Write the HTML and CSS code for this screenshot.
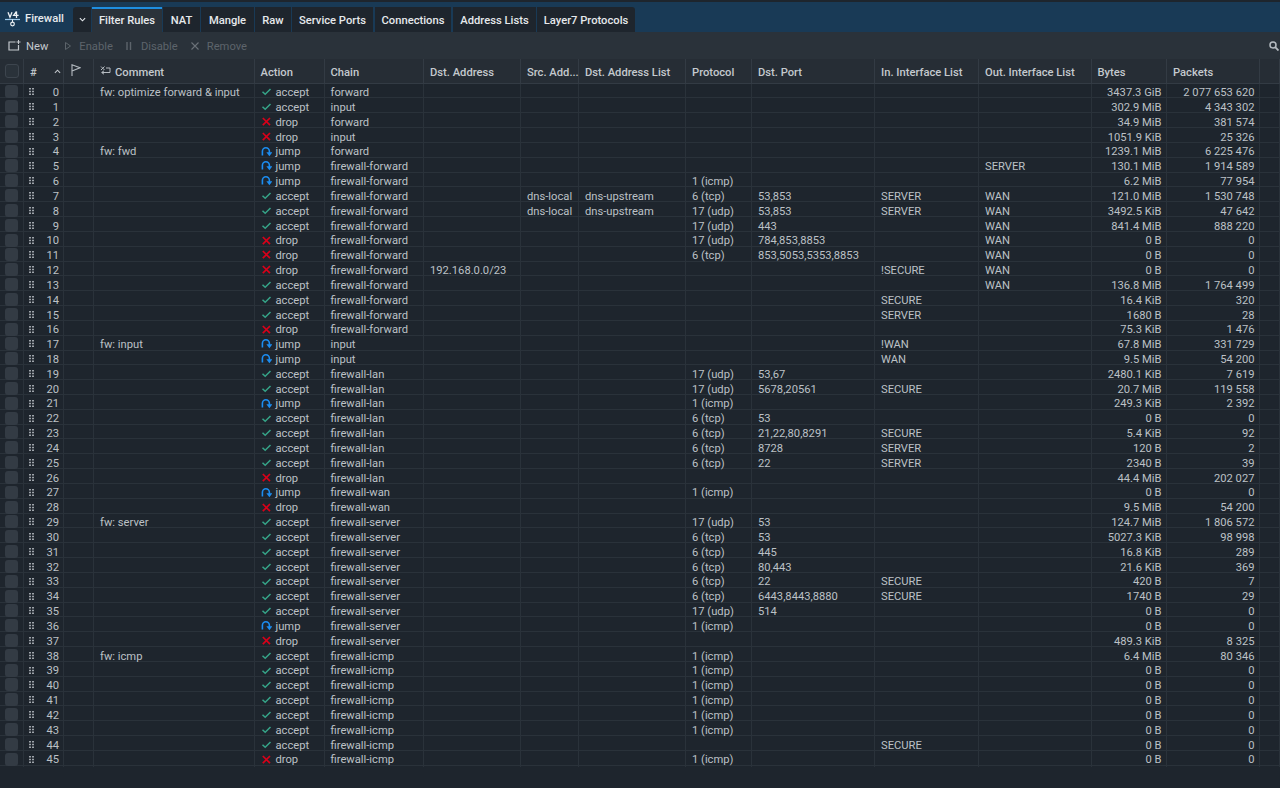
FILE: index.html
```html
<!DOCTYPE html>
<html lang="en">
<head>
<meta charset="utf-8">
<title>Firewall</title>
<link rel="stylesheet" href="styles.css">
</head>
<body>
<svg class="defs" width="0" height="0" aria-hidden="true">
<symbol id="ok" viewBox="0 0 11 11"><path d="M1.5 5.7 4.2 8.3 9.5 3" fill="none" stroke="#36a488" stroke-width="1.5"/></symbol>
<symbol id="no" viewBox="0 0 11 11"><path d="M1.8 2 9 9.2M9 2 1.8 9.2" fill="none" stroke="#d90019" stroke-width="1.7"/></symbol>
<symbol id="jp" viewBox="0 0 11 11"><path d="M1.4 9.5V5.2a3.5 3.5 0 0 1 7 0V7" fill="none" stroke="#1c8df0" stroke-width="1.6"/><path d="M5.4 6.2h6L8.4 10.2z" fill="#1c8df0"/></symbol>
<symbol id="gr" viewBox="0 0 5 7"><path d="M0 0h2v1.6H0zM3 0h2v1.6H3zM0 2.7h2v1.6H0zM3 2.7h2v1.6H3zM0 5.4h2V7H0zM3 5.4h2V7H3z" fill="#9ea4aa"/></symbol>
</svg>
<header class="topbar">
  <div class="brand">
    <svg class="logo" viewBox="0 0 15 16"><path d="M0 8.5h15" stroke="#9cc8ea" stroke-width="1.2"/><path d="M3 1.2 5 6.2 7 1.2M11.5.4 8.6 4.4H13.6M11.5.4V7" fill="none" stroke="#eef1f3" stroke-width="1.3"/><circle cx="7.5" cy="13" r="1.8" fill="none" stroke="#eef1f3" stroke-width="1.2"/><path d="M7.5 8.5v2.6" stroke="#eef1f3"/></svg>
    <span>Firewall</span>
  </div>
  <nav class="tabs">
    <div class="tab more"><svg viewBox="0 0 8 5" class="chev"><path d="M1 1 4 4 7 1" fill="none" stroke="#e4e8ec" stroke-width="1.3"/></svg></div>
    <div class="tab active t1">Filter Rules</div>
    <div class="tab t2">NAT</div>
    <div class="tab t3">Mangle</div>
    <div class="tab t4">Raw</div>
    <div class="tab t5">Service Ports</div>
    <div class="tab t6">Connections</div>
    <div class="tab t7">Address Lists</div>
    <div class="tab t8">Layer7 Protocols</div>
  </nav>
</header>
<div class="toolbar">
  <div class="tool on"><svg class="ti" viewBox="0 0 13 11"><path d="M7.5 2H1v8h9.5V5" fill="none" stroke="#c4c9ce" stroke-width="1.2"/><path d="M10.5 0v4M8.5 2h4" stroke="#c4c9ce"/></svg>New</div>
  <div class="tool en"><svg class="ts" viewBox="0 0 6 8"><path d="M.5.5 5.5 4 .5 7.5z" fill="none" stroke="#5d646b"/></svg>Enable</div>
  <div class="tool dis"><svg class="ts" viewBox="0 0 6 8"><path d="M1 0v8M4.5 0v8" stroke="#5d646b" stroke-width="1.4"/></svg>Disable</div>
  <div class="tool"><svg class="ts x" viewBox="0 0 8 8"><path d="M.5.5 7.5 7.5M7.5.5.5 7.5" stroke="#6a7178" stroke-width="1.1"/></svg>Remove</div>
  <svg class="search" viewBox="0 0 10 10"><circle cx="4" cy="4" r="3" fill="none" stroke="#b5bbc1" stroke-width="1.5"/><path d="M6.2 6.2 9.5 9.5" stroke="#b5bbc1" stroke-width="1.8"/></svg>
</div>
<main class="grid">
<div class="row head">
<div class="c"><span class="box"></span></div>
<div class="c idx"><span>#</span><svg class="sort" viewBox="0 0 8 5"><path d="M1 4 4 1 7 4" fill="none" stroke="#c4c9ce" stroke-width="1.2"/></svg></div>
<div class="c fl"><svg class="flag" viewBox="0 0 10 12"><path d="M1 12V.8L9 3.8 1 7" fill="none" stroke="#b5bbc1" stroke-width="1.1"/></svg></div>
<div class="c"><svg class="cm" viewBox="0 0 11 11"><path d="M1 .5 4.5 4M4.5.5 1 4M6 2h4v4.5H2M4 4.8 1.6 6.5 4 8.2" fill="none" stroke="#b5bbc1"/></svg>Comment</div>
<div class="c">Action</div><div class="c">Chain</div><div class="c">Dst. Address</div><div class="c">Src. Add...</div><div class="c">Dst. Address List</div><div class="c">Protocol</div><div class="c">Dst. Port</div><div class="c">In. Interface List</div><div class="c">Out. Interface List</div><div class="c">Bytes</div><div class="c">Packets</div><div class="c"></div>
</div>
<div class="row"><div class="c"><span class="box"></span></div><div class="c idx"><svg class="grip"><use href="#gr"/></svg><span class="n">0</span></div><div class="c"></div><div class="c">fw: optimize forward &amp; input</div><div class="c"><svg class="a"><use href="#ok"/></svg>accept</div><div class="c">forward</div><div class="c"></div><div class="c"></div><div class="c"></div><div class="c"></div><div class="c"></div><div class="c"></div><div class="c"></div><div class="c r">3437.3 GiB</div><div class="c r">2 077 653 620</div><div class="c"></div></div>
<div class="row"><div class="c"><span class="box"></span></div><div class="c idx"><svg class="grip"><use href="#gr"/></svg><span class="n">1</span></div><div class="c"></div><div class="c"></div><div class="c"><svg class="a"><use href="#ok"/></svg>accept</div><div class="c">input</div><div class="c"></div><div class="c"></div><div class="c"></div><div class="c"></div><div class="c"></div><div class="c"></div><div class="c"></div><div class="c r">302.9 MiB</div><div class="c r">4 343 302</div><div class="c"></div></div>
<div class="row"><div class="c"><span class="box"></span></div><div class="c idx"><svg class="grip"><use href="#gr"/></svg><span class="n">2</span></div><div class="c"></div><div class="c"></div><div class="c"><svg class="a"><use href="#no"/></svg>drop</div><div class="c">forward</div><div class="c"></div><div class="c"></div><div class="c"></div><div class="c"></div><div class="c"></div><div class="c"></div><div class="c"></div><div class="c r">34.9 MiB</div><div class="c r">381 574</div><div class="c"></div></div>
<div class="row"><div class="c"><span class="box"></span></div><div class="c idx"><svg class="grip"><use href="#gr"/></svg><span class="n">3</span></div><div class="c"></div><div class="c"></div><div class="c"><svg class="a"><use href="#no"/></svg>drop</div><div class="c">input</div><div class="c"></div><div class="c"></div><div class="c"></div><div class="c"></div><div class="c"></div><div class="c"></div><div class="c"></div><div class="c r">1051.9 KiB</div><div class="c r">25 326</div><div class="c"></div></div>
<div class="row"><div class="c"><span class="box"></span></div><div class="c idx"><svg class="grip"><use href="#gr"/></svg><span class="n">4</span></div><div class="c"></div><div class="c">fw: fwd</div><div class="c"><svg class="a"><use href="#jp"/></svg>jump</div><div class="c">forward</div><div class="c"></div><div class="c"></div><div class="c"></div><div class="c"></div><div class="c"></div><div class="c"></div><div class="c"></div><div class="c r">1239.1 MiB</div><div class="c r">6 225 476</div><div class="c"></div></div>
<div class="row"><div class="c"><span class="box"></span></div><div class="c idx"><svg class="grip"><use href="#gr"/></svg><span class="n">5</span></div><div class="c"></div><div class="c"></div><div class="c"><svg class="a"><use href="#jp"/></svg>jump</div><div class="c">firewall-forward</div><div class="c"></div><div class="c"></div><div class="c"></div><div class="c"></div><div class="c"></div><div class="c"></div><div class="c">SERVER</div><div class="c r">130.1 MiB</div><div class="c r">1 914 589</div><div class="c"></div></div>
<div class="row"><div class="c"><span class="box"></span></div><div class="c idx"><svg class="grip"><use href="#gr"/></svg><span class="n">6</span></div><div class="c"></div><div class="c"></div><div class="c"><svg class="a"><use href="#jp"/></svg>jump</div><div class="c">firewall-forward</div><div class="c"></div><div class="c"></div><div class="c"></div><div class="c">1 (icmp)</div><div class="c"></div><div class="c"></div><div class="c"></div><div class="c r">6.2 MiB</div><div class="c r">77 954</div><div class="c"></div></div>
<div class="row"><div class="c"><span class="box"></span></div><div class="c idx"><svg class="grip"><use href="#gr"/></svg><span class="n">7</span></div><div class="c"></div><div class="c"></div><div class="c"><svg class="a"><use href="#ok"/></svg>accept</div><div class="c">firewall-forward</div><div class="c"></div><div class="c">dns-local</div><div class="c">dns-upstream</div><div class="c">6 (tcp)</div><div class="c">53,853</div><div class="c">SERVER</div><div class="c">WAN</div><div class="c r">121.0 MiB</div><div class="c r">1 530 748</div><div class="c"></div></div>
<div class="row"><div class="c"><span class="box"></span></div><div class="c idx"><svg class="grip"><use href="#gr"/></svg><span class="n">8</span></div><div class="c"></div><div class="c"></div><div class="c"><svg class="a"><use href="#ok"/></svg>accept</div><div class="c">firewall-forward</div><div class="c"></div><div class="c">dns-local</div><div class="c">dns-upstream</div><div class="c">17 (udp)</div><div class="c">53,853</div><div class="c">SERVER</div><div class="c">WAN</div><div class="c r">3492.5 KiB</div><div class="c r">47 642</div><div class="c"></div></div>
<div class="row"><div class="c"><span class="box"></span></div><div class="c idx"><svg class="grip"><use href="#gr"/></svg><span class="n">9</span></div><div class="c"></div><div class="c"></div><div class="c"><svg class="a"><use href="#ok"/></svg>accept</div><div class="c">firewall-forward</div><div class="c"></div><div class="c"></div><div class="c"></div><div class="c">17 (udp)</div><div class="c">443</div><div class="c"></div><div class="c">WAN</div><div class="c r">841.4 MiB</div><div class="c r">888 220</div><div class="c"></div></div>
<div class="row"><div class="c"><span class="box"></span></div><div class="c idx"><svg class="grip"><use href="#gr"/></svg><span class="n">10</span></div><div class="c"></div><div class="c"></div><div class="c"><svg class="a"><use href="#no"/></svg>drop</div><div class="c">firewall-forward</div><div class="c"></div><div class="c"></div><div class="c"></div><div class="c">17 (udp)</div><div class="c">784,853,8853</div><div class="c"></div><div class="c">WAN</div><div class="c r">0 B</div><div class="c r">0</div><div class="c"></div></div>
<div class="row"><div class="c"><span class="box"></span></div><div class="c idx"><svg class="grip"><use href="#gr"/></svg><span class="n">11</span></div><div class="c"></div><div class="c"></div><div class="c"><svg class="a"><use href="#no"/></svg>drop</div><div class="c">firewall-forward</div><div class="c"></div><div class="c"></div><div class="c"></div><div class="c">6 (tcp)</div><div class="c">853,5053,5353,8853</div><div class="c"></div><div class="c">WAN</div><div class="c r">0 B</div><div class="c r">0</div><div class="c"></div></div>
<div class="row"><div class="c"><span class="box"></span></div><div class="c idx"><svg class="grip"><use href="#gr"/></svg><span class="n">12</span></div><div class="c"></div><div class="c"></div><div class="c"><svg class="a"><use href="#no"/></svg>drop</div><div class="c">firewall-forward</div><div class="c">192.168.0.0/23</div><div class="c"></div><div class="c"></div><div class="c"></div><div class="c"></div><div class="c">!SECURE</div><div class="c">WAN</div><div class="c r">0 B</div><div class="c r">0</div><div class="c"></div></div>
<div class="row"><div class="c"><span class="box"></span></div><div class="c idx"><svg class="grip"><use href="#gr"/></svg><span class="n">13</span></div><div class="c"></div><div class="c"></div><div class="c"><svg class="a"><use href="#ok"/></svg>accept</div><div class="c">firewall-forward</div><div class="c"></div><div class="c"></div><div class="c"></div><div class="c"></div><div class="c"></div><div class="c"></div><div class="c">WAN</div><div class="c r">136.8 MiB</div><div class="c r">1 764 499</div><div class="c"></div></div>
<div class="row"><div class="c"><span class="box"></span></div><div class="c idx"><svg class="grip"><use href="#gr"/></svg><span class="n">14</span></div><div class="c"></div><div class="c"></div><div class="c"><svg class="a"><use href="#ok"/></svg>accept</div><div class="c">firewall-forward</div><div class="c"></div><div class="c"></div><div class="c"></div><div class="c"></div><div class="c"></div><div class="c">SECURE</div><div class="c"></div><div class="c r">16.4 KiB</div><div class="c r">320</div><div class="c"></div></div>
<div class="row"><div class="c"><span class="box"></span></div><div class="c idx"><svg class="grip"><use href="#gr"/></svg><span class="n">15</span></div><div class="c"></div><div class="c"></div><div class="c"><svg class="a"><use href="#ok"/></svg>accept</div><div class="c">firewall-forward</div><div class="c"></div><div class="c"></div><div class="c"></div><div class="c"></div><div class="c"></div><div class="c">SERVER</div><div class="c"></div><div class="c r">1680 B</div><div class="c r">28</div><div class="c"></div></div>
<div class="row"><div class="c"><span class="box"></span></div><div class="c idx"><svg class="grip"><use href="#gr"/></svg><span class="n">16</span></div><div class="c"></div><div class="c"></div><div class="c"><svg class="a"><use href="#no"/></svg>drop</div><div class="c">firewall-forward</div><div class="c"></div><div class="c"></div><div class="c"></div><div class="c"></div><div class="c"></div><div class="c"></div><div class="c"></div><div class="c r">75.3 KiB</div><div class="c r">1 476</div><div class="c"></div></div>
<div class="row"><div class="c"><span class="box"></span></div><div class="c idx"><svg class="grip"><use href="#gr"/></svg><span class="n">17</span></div><div class="c"></div><div class="c">fw: input</div><div class="c"><svg class="a"><use href="#jp"/></svg>jump</div><div class="c">input</div><div class="c"></div><div class="c"></div><div class="c"></div><div class="c"></div><div class="c"></div><div class="c">!WAN</div><div class="c"></div><div class="c r">67.8 MiB</div><div class="c r">331 729</div><div class="c"></div></div>
<div class="row"><div class="c"><span class="box"></span></div><div class="c idx"><svg class="grip"><use href="#gr"/></svg><span class="n">18</span></div><div class="c"></div><div class="c"></div><div class="c"><svg class="a"><use href="#jp"/></svg>jump</div><div class="c">input</div><div class="c"></div><div class="c"></div><div class="c"></div><div class="c"></div><div class="c"></div><div class="c">WAN</div><div class="c"></div><div class="c r">9.5 MiB</div><div class="c r">54 200</div><div class="c"></div></div>
<div class="row"><div class="c"><span class="box"></span></div><div class="c idx"><svg class="grip"><use href="#gr"/></svg><span class="n">19</span></div><div class="c"></div><div class="c"></div><div class="c"><svg class="a"><use href="#ok"/></svg>accept</div><div class="c">firewall-lan</div><div class="c"></div><div class="c"></div><div class="c"></div><div class="c">17 (udp)</div><div class="c">53,67</div><div class="c"></div><div class="c"></div><div class="c r">2480.1 KiB</div><div class="c r">7 619</div><div class="c"></div></div>
<div class="row"><div class="c"><span class="box"></span></div><div class="c idx"><svg class="grip"><use href="#gr"/></svg><span class="n">20</span></div><div class="c"></div><div class="c"></div><div class="c"><svg class="a"><use href="#ok"/></svg>accept</div><div class="c">firewall-lan</div><div class="c"></div><div class="c"></div><div class="c"></div><div class="c">17 (udp)</div><div class="c">5678,20561</div><div class="c">SECURE</div><div class="c"></div><div class="c r">20.7 MiB</div><div class="c r">119 558</div><div class="c"></div></div>
<div class="row"><div class="c"><span class="box"></span></div><div class="c idx"><svg class="grip"><use href="#gr"/></svg><span class="n">21</span></div><div class="c"></div><div class="c"></div><div class="c"><svg class="a"><use href="#jp"/></svg>jump</div><div class="c">firewall-lan</div><div class="c"></div><div class="c"></div><div class="c"></div><div class="c">1 (icmp)</div><div class="c"></div><div class="c"></div><div class="c"></div><div class="c r">249.3 KiB</div><div class="c r">2 392</div><div class="c"></div></div>
<div class="row"><div class="c"><span class="box"></span></div><div class="c idx"><svg class="grip"><use href="#gr"/></svg><span class="n">22</span></div><div class="c"></div><div class="c"></div><div class="c"><svg class="a"><use href="#ok"/></svg>accept</div><div class="c">firewall-lan</div><div class="c"></div><div class="c"></div><div class="c"></div><div class="c">6 (tcp)</div><div class="c">53</div><div class="c"></div><div class="c"></div><div class="c r">0 B</div><div class="c r">0</div><div class="c"></div></div>
<div class="row"><div class="c"><span class="box"></span></div><div class="c idx"><svg class="grip"><use href="#gr"/></svg><span class="n">23</span></div><div class="c"></div><div class="c"></div><div class="c"><svg class="a"><use href="#ok"/></svg>accept</div><div class="c">firewall-lan</div><div class="c"></div><div class="c"></div><div class="c"></div><div class="c">6 (tcp)</div><div class="c">21,22,80,8291</div><div class="c">SECURE</div><div class="c"></div><div class="c r">5.4 KiB</div><div class="c r">92</div><div class="c"></div></div>
<div class="row"><div class="c"><span class="box"></span></div><div class="c idx"><svg class="grip"><use href="#gr"/></svg><span class="n">24</span></div><div class="c"></div><div class="c"></div><div class="c"><svg class="a"><use href="#ok"/></svg>accept</div><div class="c">firewall-lan</div><div class="c"></div><div class="c"></div><div class="c"></div><div class="c">6 (tcp)</div><div class="c">8728</div><div class="c">SERVER</div><div class="c"></div><div class="c r">120 B</div><div class="c r">2</div><div class="c"></div></div>
<div class="row"><div class="c"><span class="box"></span></div><div class="c idx"><svg class="grip"><use href="#gr"/></svg><span class="n">25</span></div><div class="c"></div><div class="c"></div><div class="c"><svg class="a"><use href="#ok"/></svg>accept</div><div class="c">firewall-lan</div><div class="c"></div><div class="c"></div><div class="c"></div><div class="c">6 (tcp)</div><div class="c">22</div><div class="c">SERVER</div><div class="c"></div><div class="c r">2340 B</div><div class="c r">39</div><div class="c"></div></div>
<div class="row"><div class="c"><span class="box"></span></div><div class="c idx"><svg class="grip"><use href="#gr"/></svg><span class="n">26</span></div><div class="c"></div><div class="c"></div><div class="c"><svg class="a"><use href="#no"/></svg>drop</div><div class="c">firewall-lan</div><div class="c"></div><div class="c"></div><div class="c"></div><div class="c"></div><div class="c"></div><div class="c"></div><div class="c"></div><div class="c r">44.4 MiB</div><div class="c r">202 027</div><div class="c"></div></div>
<div class="row"><div class="c"><span class="box"></span></div><div class="c idx"><svg class="grip"><use href="#gr"/></svg><span class="n">27</span></div><div class="c"></div><div class="c"></div><div class="c"><svg class="a"><use href="#jp"/></svg>jump</div><div class="c">firewall-wan</div><div class="c"></div><div class="c"></div><div class="c"></div><div class="c">1 (icmp)</div><div class="c"></div><div class="c"></div><div class="c"></div><div class="c r">0 B</div><div class="c r">0</div><div class="c"></div></div>
<div class="row"><div class="c"><span class="box"></span></div><div class="c idx"><svg class="grip"><use href="#gr"/></svg><span class="n">28</span></div><div class="c"></div><div class="c"></div><div class="c"><svg class="a"><use href="#no"/></svg>drop</div><div class="c">firewall-wan</div><div class="c"></div><div class="c"></div><div class="c"></div><div class="c"></div><div class="c"></div><div class="c"></div><div class="c"></div><div class="c r">9.5 MiB</div><div class="c r">54 200</div><div class="c"></div></div>
<div class="row"><div class="c"><span class="box"></span></div><div class="c idx"><svg class="grip"><use href="#gr"/></svg><span class="n">29</span></div><div class="c"></div><div class="c">fw: server</div><div class="c"><svg class="a"><use href="#ok"/></svg>accept</div><div class="c">firewall-server</div><div class="c"></div><div class="c"></div><div class="c"></div><div class="c">17 (udp)</div><div class="c">53</div><div class="c"></div><div class="c"></div><div class="c r">124.7 MiB</div><div class="c r">1 806 572</div><div class="c"></div></div>
<div class="row"><div class="c"><span class="box"></span></div><div class="c idx"><svg class="grip"><use href="#gr"/></svg><span class="n">30</span></div><div class="c"></div><div class="c"></div><div class="c"><svg class="a"><use href="#ok"/></svg>accept</div><div class="c">firewall-server</div><div class="c"></div><div class="c"></div><div class="c"></div><div class="c">6 (tcp)</div><div class="c">53</div><div class="c"></div><div class="c"></div><div class="c r">5027.3 KiB</div><div class="c r">98 998</div><div class="c"></div></div>
<div class="row"><div class="c"><span class="box"></span></div><div class="c idx"><svg class="grip"><use href="#gr"/></svg><span class="n">31</span></div><div class="c"></div><div class="c"></div><div class="c"><svg class="a"><use href="#ok"/></svg>accept</div><div class="c">firewall-server</div><div class="c"></div><div class="c"></div><div class="c"></div><div class="c">6 (tcp)</div><div class="c">445</div><div class="c"></div><div class="c"></div><div class="c r">16.8 KiB</div><div class="c r">289</div><div class="c"></div></div>
<div class="row"><div class="c"><span class="box"></span></div><div class="c idx"><svg class="grip"><use href="#gr"/></svg><span class="n">32</span></div><div class="c"></div><div class="c"></div><div class="c"><svg class="a"><use href="#ok"/></svg>accept</div><div class="c">firewall-server</div><div class="c"></div><div class="c"></div><div class="c"></div><div class="c">6 (tcp)</div><div class="c">80,443</div><div class="c"></div><div class="c"></div><div class="c r">21.6 KiB</div><div class="c r">369</div><div class="c"></div></div>
<div class="row"><div class="c"><span class="box"></span></div><div class="c idx"><svg class="grip"><use href="#gr"/></svg><span class="n">33</span></div><div class="c"></div><div class="c"></div><div class="c"><svg class="a"><use href="#ok"/></svg>accept</div><div class="c">firewall-server</div><div class="c"></div><div class="c"></div><div class="c"></div><div class="c">6 (tcp)</div><div class="c">22</div><div class="c">SECURE</div><div class="c"></div><div class="c r">420 B</div><div class="c r">7</div><div class="c"></div></div>
<div class="row"><div class="c"><span class="box"></span></div><div class="c idx"><svg class="grip"><use href="#gr"/></svg><span class="n">34</span></div><div class="c"></div><div class="c"></div><div class="c"><svg class="a"><use href="#ok"/></svg>accept</div><div class="c">firewall-server</div><div class="c"></div><div class="c"></div><div class="c"></div><div class="c">6 (tcp)</div><div class="c">6443,8443,8880</div><div class="c">SECURE</div><div class="c"></div><div class="c r">1740 B</div><div class="c r">29</div><div class="c"></div></div>
<div class="row"><div class="c"><span class="box"></span></div><div class="c idx"><svg class="grip"><use href="#gr"/></svg><span class="n">35</span></div><div class="c"></div><div class="c"></div><div class="c"><svg class="a"><use href="#ok"/></svg>accept</div><div class="c">firewall-server</div><div class="c"></div><div class="c"></div><div class="c"></div><div class="c">17 (udp)</div><div class="c">514</div><div class="c"></div><div class="c"></div><div class="c r">0 B</div><div class="c r">0</div><div class="c"></div></div>
<div class="row"><div class="c"><span class="box"></span></div><div class="c idx"><svg class="grip"><use href="#gr"/></svg><span class="n">36</span></div><div class="c"></div><div class="c"></div><div class="c"><svg class="a"><use href="#jp"/></svg>jump</div><div class="c">firewall-server</div><div class="c"></div><div class="c"></div><div class="c"></div><div class="c">1 (icmp)</div><div class="c"></div><div class="c"></div><div class="c"></div><div class="c r">0 B</div><div class="c r">0</div><div class="c"></div></div>
<div class="row"><div class="c"><span class="box"></span></div><div class="c idx"><svg class="grip"><use href="#gr"/></svg><span class="n">37</span></div><div class="c"></div><div class="c"></div><div class="c"><svg class="a"><use href="#no"/></svg>drop</div><div class="c">firewall-server</div><div class="c"></div><div class="c"></div><div class="c"></div><div class="c"></div><div class="c"></div><div class="c"></div><div class="c"></div><div class="c r">489.3 KiB</div><div class="c r">8 325</div><div class="c"></div></div>
<div class="row"><div class="c"><span class="box"></span></div><div class="c idx"><svg class="grip"><use href="#gr"/></svg><span class="n">38</span></div><div class="c"></div><div class="c">fw: icmp</div><div class="c"><svg class="a"><use href="#ok"/></svg>accept</div><div class="c">firewall-icmp</div><div class="c"></div><div class="c"></div><div class="c"></div><div class="c">1 (icmp)</div><div class="c"></div><div class="c"></div><div class="c"></div><div class="c r">6.4 MiB</div><div class="c r">80 346</div><div class="c"></div></div>
<div class="row"><div class="c"><span class="box"></span></div><div class="c idx"><svg class="grip"><use href="#gr"/></svg><span class="n">39</span></div><div class="c"></div><div class="c"></div><div class="c"><svg class="a"><use href="#ok"/></svg>accept</div><div class="c">firewall-icmp</div><div class="c"></div><div class="c"></div><div class="c"></div><div class="c">1 (icmp)</div><div class="c"></div><div class="c"></div><div class="c"></div><div class="c r">0 B</div><div class="c r">0</div><div class="c"></div></div>
<div class="row"><div class="c"><span class="box"></span></div><div class="c idx"><svg class="grip"><use href="#gr"/></svg><span class="n">40</span></div><div class="c"></div><div class="c"></div><div class="c"><svg class="a"><use href="#ok"/></svg>accept</div><div class="c">firewall-icmp</div><div class="c"></div><div class="c"></div><div class="c"></div><div class="c">1 (icmp)</div><div class="c"></div><div class="c"></div><div class="c"></div><div class="c r">0 B</div><div class="c r">0</div><div class="c"></div></div>
<div class="row"><div class="c"><span class="box"></span></div><div class="c idx"><svg class="grip"><use href="#gr"/></svg><span class="n">41</span></div><div class="c"></div><div class="c"></div><div class="c"><svg class="a"><use href="#ok"/></svg>accept</div><div class="c">firewall-icmp</div><div class="c"></div><div class="c"></div><div class="c"></div><div class="c">1 (icmp)</div><div class="c"></div><div class="c"></div><div class="c"></div><div class="c r">0 B</div><div class="c r">0</div><div class="c"></div></div>
<div class="row"><div class="c"><span class="box"></span></div><div class="c idx"><svg class="grip"><use href="#gr"/></svg><span class="n">42</span></div><div class="c"></div><div class="c"></div><div class="c"><svg class="a"><use href="#ok"/></svg>accept</div><div class="c">firewall-icmp</div><div class="c"></div><div class="c"></div><div class="c"></div><div class="c">1 (icmp)</div><div class="c"></div><div class="c"></div><div class="c"></div><div class="c r">0 B</div><div class="c r">0</div><div class="c"></div></div>
<div class="row"><div class="c"><span class="box"></span></div><div class="c idx"><svg class="grip"><use href="#gr"/></svg><span class="n">43</span></div><div class="c"></div><div class="c"></div><div class="c"><svg class="a"><use href="#ok"/></svg>accept</div><div class="c">firewall-icmp</div><div class="c"></div><div class="c"></div><div class="c"></div><div class="c">1 (icmp)</div><div class="c"></div><div class="c"></div><div class="c"></div><div class="c r">0 B</div><div class="c r">0</div><div class="c"></div></div>
<div class="row"><div class="c"><span class="box"></span></div><div class="c idx"><svg class="grip"><use href="#gr"/></svg><span class="n">44</span></div><div class="c"></div><div class="c"></div><div class="c"><svg class="a"><use href="#ok"/></svg>accept</div><div class="c">firewall-icmp</div><div class="c"></div><div class="c"></div><div class="c"></div><div class="c"></div><div class="c"></div><div class="c">SECURE</div><div class="c"></div><div class="c r">0 B</div><div class="c r">0</div><div class="c"></div></div>
<div class="row"><div class="c"><span class="box"></span></div><div class="c idx"><svg class="grip"><use href="#gr"/></svg><span class="n">45</span></div><div class="c"></div><div class="c"></div><div class="c"><svg class="a"><use href="#no"/></svg>drop</div><div class="c">firewall-icmp</div><div class="c"></div><div class="c"></div><div class="c"></div><div class="c">1 (icmp)</div><div class="c"></div><div class="c"></div><div class="c"></div><div class="c r">0 B</div><div class="c r">0</div><div class="c"></div></div>
</main>
</body>
</html>
```

FILE: styles.css
```css
* { box-sizing: border-box; }
html, body { margin: 0; height: 100%; }
body {
  width: 1280px; height: 788px; overflow: hidden;
  background: #1e252d; color: #bcc1c6;
  font: 11.2px/14px Roboto, sans-serif;
  display: flex; flex-direction: column;
}
.defs { position: absolute; }
.topbar {
  flex: none; height: 32px; display: flex; align-items: flex-end;
  background: #193a56; border-top: 2px solid #1e252d;
}
.brand {
  width: 73px; height: 30px; flex: none; display: flex; align-items: center;
  padding: 4px 0 0 5px; gap: 5px; font-weight: 500; color: #e6e9ec;
}
.logo { width: 15px; height: 16px; flex: none; margin-top: -1px; }
.tabs { display: flex; height: 25px; }
.tab {
  display: flex; align-items: center; justify-content: center; padding-top: 2px;
  background: #1e252d; color: #e6e9ec; font-weight: 500; margin-right: 1px; flex: none;
}
.more { width: 18px; margin-right: 1px; border-radius: 3px 0 0 0; padding-top: 0; }
.chev { width: 7px; height: 5px; }
.active { background: #2a323a; border-top: 2px solid #1f8ee0; padding-top: 0; }
.t1 { width: 70px; } .t2 { width: 37px; } .t3 { width: 53px; } .t4 { width: 36px; }
.t5 { width: 81px; margin-right: 2px; } .t6 { width: 76px; margin-right: 2px; } .t7 { width: 83px; margin-right: 1px; }
.t8 { width: 98px; border-radius: 0 3px 0 0; }
.toolbar {
  flex: none; height: 27px; background: #2a323a; display: flex; align-items: center;
  padding: 2px 0 0 8px; color: #5d646b; position: relative;
}
.tool { display: flex; align-items: center; margin-right: 13px; }
.tool svg { margin-top: -2px; }
.tool.on { color: #c4c9ce; margin-right: 17px; }
.tool.en { margin-right: 13px; }
.ti { width: 13px; height: 11px; margin-right: 5px; }
.ts { width: 6px; height: 8px; margin-right: 8px; }
.dis .ts { margin-right: 9px; }
.ts.x { width: 8px; margin-right: 8px; }
.search { width: 10px; height: 10px; position: absolute; right: 1px; top: 9px; }
.grid { flex: none; }
.row {
  display: grid; height: 14.84px; width: 1280px;
  grid-template-columns: 24px 40px 30px 160.5px 70px 99.5px 97px 58px 107px 66px 123px 104px 112.5px 75.5px 93px 20px;
  border-bottom: 1px solid #2a323a; background: #1e252d;
}
.head { height: 24.6px; background: #262d35; font-weight: 500; color: #c4c9ce; border-bottom-color: #333b44; }
.c {
  position: relative; display: flex; align-items: center; padding: 2.5px 6px 0;
  border-right: 1px solid #2a323a; white-space: nowrap; overflow: visible; min-width: 0;
}
.head .c { border-right-color: #333b44; padding-top: 4px; }
.r { justify-content: flex-end; padding-right: 4.5px; }
.box {
  width: 13px; height: 13px; border-radius: 3px; background: #333b44; margin-left: -1px; margin-top: -2.5px; flex: none;
}
.head .box { width: 14px; height: 14px; border: 1px solid #3d454e; background: #2a323a; margin-top: -4px; }
.idx { padding-left: 5px; padding-right: 4px; justify-content: space-between; }
.head .idx { padding-left: 6px; padding-right: 2px; }
.n { margin-left: auto; }
.grip { width: 5px; height: 7px; flex: none; margin-top: -2.5px; }
.a { width: 11px; height: 11px; margin-right: 4px; flex: none; margin-top: -2.5px; }
.sort { width: 7px; height: 5px; margin-top: -2px; }
.head .fl { padding-left: 7px; }
.flag { width: 10px; height: 12px; margin-top: -5px; }
.cm { width: 11px; height: 11px; margin-right: 4px; margin-top: -3px; }
```
